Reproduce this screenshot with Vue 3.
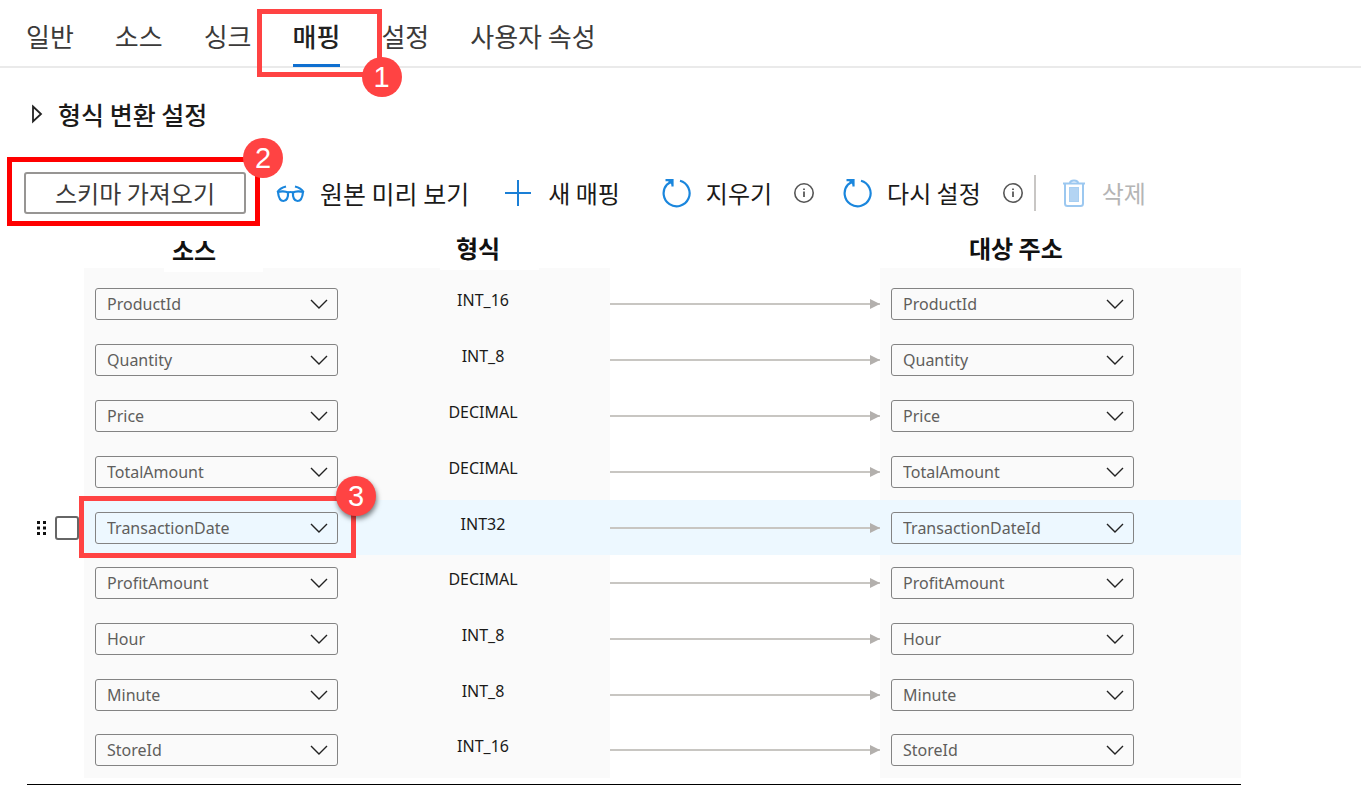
<script setup>
import { ref } from 'vue'

const tabs = ['일반', '소스', '싱크', '매핑', '설정', '사용자 속성']
const activeTab = ref('매핑')

const columns = ['ProductId', 'Quantity', 'Price', 'TotalAmount', 'TransactionDate', 'ProfitAmount', 'Hour', 'Minute', 'StoreId']
const types = ['INT_16', 'INT_8', 'DECIMAL', 'DECIMAL', 'INT32', 'DECIMAL', 'INT_8', 'INT_8', 'INT_16']
const targets = columns.map((c) => (c === 'TransactionDate' ? 'TransactionDateId' : c))

const rows = ref(
  columns.map((source, i) => ({
    source,
    type: types[i],
    target: targets[i],
    selected: source === 'TransactionDate',
  }))
)
</script>

<template>
  <main class="page">
    <nav class="tabs" role="tablist">
      <div v-for="tab in tabs" :key="tab" class="tab-slot">
        <button
          type="button"
          role="tab"
          class="tab"
          :class="{ active: tab === activeTab }"
          :aria-selected="tab === activeTab"
          @click="activeTab = tab"
        >{{ tab }}</button>
        <div v-if="tab === '매핑'" class="callout callout-tab"><span class="badge">1</span></div>
      </div>
    </nav>

    <button type="button" class="expander">
      <svg width="12" height="20" viewBox="0 0 12 20" aria-hidden="true">
        <path d="M2 2.500 L10 10 L2 17.500 Z" fill="none" stroke="#222" stroke-width="1.800" />
      </svg>
      형식 변환 설정
    </button>

    <div class="toolbar">
      <div class="import-slot">
        <button type="button" class="import">스키마 가져오기</button>
        <div class="callout callout-import"><span class="badge">2</span></div>
      </div>
      <button type="button" class="tool preview">
        <svg width="30" height="20" viewBox="0 0 30 20" fill="none" stroke="#1a86dd" stroke-width="2.200" aria-hidden="true">
          <path d="M3 9 C5.500 8 10.500 8 13 9.500 C13.500 14.500 11.500 18 8.500 18 C5.500 18 3.500 14.500 3 9 Z" />
          <path d="M28 9 C25.500 8 20.500 8 18 9.500 C17.500 14.500 19.500 18 22.500 18 C25.500 18 27.500 14.500 28 9 Z" />
          <path d="M12.500 9.500 Q15.500 8.500 18.500 9.500" />
          <path d="M2.500 9 Q5 5 11 3.500 M28.500 9 Q26 5 20 3.500" />
        </svg>
        원본 미리 보기
      </button>
      <button type="button" class="tool add">
        <svg width="30" height="28" viewBox="0 0 30 28" aria-hidden="true">
          <path d="M15 1 V27 M2 14 H28" stroke="#1a7fd6" stroke-width="2" />
        </svg>
        새 매핑
      </button>
      <button type="button" class="tool clear">
        <svg width="30" height="30" viewBox="0 0 30 30" fill="none" stroke="#1a86dd" stroke-width="2.200" aria-hidden="true">
          <path d="M19 2.700 A13 13 0 1 1 6 6.500 L11 3" />
          <path d="M4.500 2.200 H11.500 V8.500" />
          <path d="M7 3 H11 V7 Z" fill="#1a86dd" stroke="none" />
        </svg>
        지우기
      </button>
      <button type="button" class="info" aria-label="지우기 정보">
        <svg width="22" height="22" viewBox="0 0 22 22" aria-hidden="true">
          <circle cx="11" cy="11" r="9.200" fill="none" stroke="#555" stroke-width="1.600" />
          <path d="M11 9.500 V15 M11 6.500 V8" stroke="#444" stroke-width="1.600" />
        </svg>
      </button>
      <button type="button" class="tool reset">
        <svg width="30" height="30" viewBox="0 0 30 30" fill="none" stroke="#1a86dd" stroke-width="2.200" aria-hidden="true">
          <path d="M19 2.700 A13 13 0 1 1 6 6.500 L11 3" />
          <path d="M4.500 2.200 H11.500 V8.500" />
          <path d="M7 3 H11 V7 Z" fill="#1a86dd" stroke="none" />
        </svg>
        다시 설정
      </button>
      <button type="button" class="info" aria-label="다시 설정 정보">
        <svg width="22" height="22" viewBox="0 0 22 22" aria-hidden="true">
          <circle cx="11" cy="11" r="9.200" fill="none" stroke="#555" stroke-width="1.600" />
          <path d="M11 9.500 V15 M11 6.500 V8" stroke="#444" stroke-width="1.600" />
        </svg>
      </button>
      <span class="divider"></span>
      <button type="button" class="tool remove" disabled>
        <svg width="24" height="30" viewBox="0 0 24 30" fill="none" stroke="#9cc8f0" stroke-width="2" aria-hidden="true">
          <path d="M1 5.500 H23 M8 5 C8 1.500 16 1.500 16 5 M3 6 V25.500 Q3 28 5.500 28 H18.500 Q21 28 21 25.500 V6" />
          <rect x="7.500" y="9.500" width="9" height="14" fill="#b3d4f3" stroke="#a8cff2" stroke-width="1" />
        </svg>
        삭제
      </button>
    </div>

    <div class="mapping">
      <table>
        <colgroup>
          <col class="col-handle" />
          <col class="col-source" />
          <col class="col-type" />
          <col />
          <col class="col-target" />
        </colgroup>
        <thead>
          <tr>
            <td></td>
            <th class="head-source" scope="col"><span>소스</span></th>
            <th class="head-type" scope="col"><span>형식</span></th>
            <td></td>
            <th class="head-target" scope="col"><span>대상 주소</span></th>
          </tr>
        </thead>
        <tbody>
          <tr v-for="row in rows" :key="row.source" :class="{ selected: row.selected }">
            <td class="handle">
              <div v-if="row.selected" class="handle-inner">
                <svg width="10" height="14" viewBox="0 0 10 14" fill="#111" aria-hidden="true">
                  <path d="M0 0h3v3H0z M6 0h3v3H6z M0 5.500h3v3H0z M6 5.500h3v3H6z M0 11h3v3H0z M6 11h3v3H6z" />
                </svg>
                <input type="checkbox" :aria-label="row.source" />
              </div>
            </td>
            <td class="field">
              <div class="select">
                <select :aria-label="'소스 ' + row.source"><option>{{ row.source }}</option></select>
                <svg width="18" height="10" viewBox="0 0 18 10" aria-hidden="true">
                  <path d="M1 1 L9 9 L17 1" fill="none" stroke="#222" stroke-width="1.400" />
                </svg>
                <div v-if="row.selected" class="callout callout-row"><span class="badge">3</span></div>
              </div>
            </td>
            <td class="type">{{ row.type }}</td>
            <td class="link">
              <div class="arrow"></div>
            </td>
            <td class="field">
              <div class="select">
                <select :aria-label="'대상 주소 ' + row.target"><option>{{ row.target }}</option></select>
                <svg width="18" height="10" viewBox="0 0 18 10" aria-hidden="true">
                  <path d="M1 1 L9 9 L17 1" fill="none" stroke="#222" stroke-width="1.400" />
                </svg>
              </div>
            </td>
          </tr>
        </tbody>
      </table>
    </div>
  </main>
</template>

<style>
body {
  background: #fff;
}
</style>

<style scoped>
.page {
  font-family: "Noto Sans", "Noto Sans CJK KR", sans-serif;
  color: #1b1a19;
}

.page * {
  box-sizing: border-box;
}

button {
  border: 0;
  padding: 0;
  background: none;
  color: inherit;
  font-family: "Noto Sans CJK KR", sans-serif;
  font-size: 24px;
  line-height: 36px;
  white-space: nowrap;
}

.tabs {
  display: flex;
  gap: 41px;
  height: 68px;
  padding-left: 26px;
  border-bottom: 2px solid #eaeaea;
}

.tab-slot {
  position: relative;
}

.tab {
  height: 67px;
  padding-top: 8px;
  border-bottom: 3px solid transparent;
  color: #3b3a39;
  font-size: 26px;
}

.tab.active {
  border-bottom-color: #0f6fd0;
  color: #222;
  font-weight: 500;
}

.callout {
  position: absolute;
  border: 5px solid #ff4343;
  pointer-events: none;
  z-index: 2;
}

.callout-tab {
  top: 9px;
  left: -36px;
  width: 125px;
  height: 68px;
}

.callout-import {
  inset: -15px -14px -12px -17px;
  border-color: #f00;
}

.callout-row {
  inset: -16px -18px -14px -16px;
}

.badge {
  position: absolute;
  width: 40px;
  height: 40px;
  border-radius: 50%;
  background: #ff4343;
  color: #fff;
  font-family: "Liberation Sans", Arial, sans-serif;
  font-size: 29px;
  line-height: 40px;
  text-align: center;
}

.callout-tab .badge {
  right: -25px;
  bottom: -25px;
}

.callout-import .badge {
  top: -24px;
  right: -28px;
}

.callout-row .badge {
  top: -25px;
  right: -25px;
  box-shadow: 1px 3px 5px rgba(0, 0, 0, 0.5);
}

.expander {
  display: flex;
  align-items: center;
  gap: 15px;
  margin: 28px 0 0 31px;
  font-size: 25px;
  font-weight: 500;
}

.toolbar {
  display: flex;
  align-items: center;
  height: 42px;
  margin: 40px 0 0 24px;
}

.import-slot {
  position: relative;
}

.import {
  width: 222px;
  height: 42px;
  border: 2px solid #979593;
  border-radius: 3px;
  color: #3b3a39;
}

.tool {
  display: flex;
  align-items: center;
  gap: 15px;
}

.preview {
  margin-left: 29px;
  font-size: 25px;
}

.add {
  margin-left: 34px;
}

.clear {
  margin-left: 41px;
}

.info {
  display: flex;
  margin-left: 21px;
}

.reset {
  margin-left: 27px;
}

.divider {
  width: 2px;
  height: 36px;
  margin-left: 10px;
  background: #c8c6c4;
}

.remove {
  gap: 16px;
  margin-left: 26px;
  color: #b5b5b5;
}

.mapping {
  margin: 14px 120px 0 27px;
  padding-bottom: 6px;
  border-bottom: 1px solid #000;
}

table {
  width: 100%;
  border-collapse: collapse;
  table-layout: fixed;
}

.col-handle {
  width: 57px;
}

.col-source {
  width: 272px;
}

.col-type {
  width: 254px;
}

.col-target {
  width: 361px;
}

td,
th {
  padding: 0;
}

thead tr {
  height: 40px;
}

th {
  font-family: "Noto Sans CJK KR", sans-serif;
  font-size: 24px;
  line-height: 40px;
  font-weight: 700;
  text-align: left;
  color: #111;
}

th span {
  position: relative;
  display: block;
}

.head-source {
  padding-left: 88px;
}

.head-source span {
  padding-top: 4px;
  line-height: 36px;
}

.head-type {
  padding-left: 100px;
}

.head-target {
  padding-left: 89px;
}

/* White tabs that overlap the top edge of the shaded columns */
.head-source span::after,
.head-type span::after {
  content: "";
  position: absolute;
  top: 100%;
  left: -8px;
  width: 99px;
  height: 4px;
  background: #fff;
}

.head-type span::after {
  left: -16px;
  height: 2px;
}

tbody tr {
  height: 56px;
}

tbody tr:nth-child(5),
tbody tr:nth-child(8) {
  height: 55px;
}

tbody tr:first-child {
  height: 64px;
}

tbody tr:first-child td {
  padding-top: 8px;
}

.field,
.type {
  background: #fafafa;
}

.selected .field,
.selected .type,
.selected .link {
  background: #edf8ff;
}

.handle-inner {
  display: flex;
  align-items: center;
  gap: 8px;
  padding-left: 10px;
}

input {
  appearance: none;
  width: 24px;
  height: 24px;
  margin: 0;
  border: 2px solid #666;
  border-radius: 3px;
  background: #fff;
}

.select {
  position: relative;
  display: flex;
  align-items: center;
  width: 243px;
  margin-left: 11px;
}

select {
  appearance: none;
  width: 100%;
  height: 32px;
  padding: 0 40px 0 11px;
  border: 1px solid #838383;
  border-radius: 3px;
  background: transparent;
  color: #605e5c;
  font-family: "Noto Sans", sans-serif;
  font-size: 16px;
}

.select svg {
  position: absolute;
  right: 10px;
  pointer-events: none;
}

.type {
  padding-bottom: 8px;
  font-size: 16px;
  line-height: 24px;
  text-align: center;
}

.arrow {
  position: relative;
  height: 2px;
  background: #c8c6c2;
}

.arrow::after {
  content: "";
  position: absolute;
  top: -4px;
  right: 0;
  border: 5px solid transparent;
  border-left: 10px solid #b3b0ad;
  border-right: 0;
}
</style>
